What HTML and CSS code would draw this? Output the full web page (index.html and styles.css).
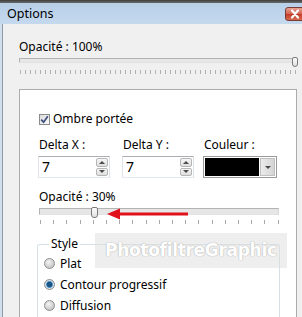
FILE: index.html
```html
<!DOCTYPE html>
<html lang="fr">
<head>
<meta charset="utf-8">
<title>Options</title>
<link rel="stylesheet" href="styles.css">
</head>
<body>
<div class="topstrip"></div>
<div class="titlebar">
  <span class="title">Options</span>
  <div class="close"><svg width="14" height="10" viewBox="0 0 14 10"><path d="M4 1.5 L10 8.5 M10 1.5 L4 8.5" stroke="#fff" stroke-width="2.2" stroke-linecap="round"/></svg></div>
</div>
<div class="main">
  <div class="frame"></div>
  <div class="content">
    <div class="label top-label">Opacité : 100%</div>
    <div class="slider slider-wide">
      <div class="track"></div>
      <div class="thumb"></div>
      <div class="ticks"></div>
    </div>
    <div class="panel">
      <div class="check-row">
        <span class="checkbox"><svg width="9" height="9" viewBox="0 0 9 9"><path d="M1.2 4.6 L3.6 7.2 L7.8 1.2" fill="none" stroke="#3c4f7e" stroke-width="1.7"/></svg></span>
        <span>Ombre portée</span>
      </div>
      <div class="fields">
        <div class="field f1">
          <div class="flabel">Delta X :</div>
          <div class="spin"><span class="val">7</span><div class="spin-btns"><div class="sbtn"><span class="up"></span></div><div class="sbtn"><span class="down"></span></div></div></div>
        </div>
        <div class="field f2">
          <div class="flabel">Delta Y :</div>
          <div class="spin"><span class="val">7</span><div class="spin-btns"><div class="sbtn"><span class="up"></span></div><div class="sbtn"><span class="down"></span></div></div></div>
        </div>
        <div class="field f3">
          <div class="flabel">Couleur :</div>
          <div class="color"><div class="swatch"></div><div class="drop"><span class="down"></span></div></div>
        </div>
      </div>
      <div class="label mid-label">Opacité : 30%</div>
      <div class="slider slider-narrow">
        <div class="track"></div>
        <div class="thumb"></div>
        <div class="ticks"></div>
      </div>
      <fieldset class="group">
        <legend>Style</legend>
        <div class="radio-row"><span class="radio"></span><span>Plat</span></div>
        <div class="radio-row"><span class="radio on"></span><span>Contour progressif</span></div>
        <div class="radio-row"><span class="radio"></span><span>Diffusion</span></div>
      </fieldset>
    </div>
  </div>
</div>
<svg class="arrow" width="82" height="12" viewBox="0 0 82 12"><path d="M0 6 L13 0.5 L13 4.5 L81 4.5 L81 7.5 L13 7.5 L13 11.5 Z" fill="#e0111b"/></svg>
<div class="watermark">PhotofiltreGraphic</div>
</body>
</html>
```

FILE: styles.css
```css
* { box-sizing: border-box; }
html, body { margin: 0; padding: 0; }
body {
  width: 302px;
  height: 317px;
  overflow: hidden;
  background: #f0f0f0;
  font-family: "Noto Sans", "Open Sans", sans-serif;
  font-size: 12px;
  color: #000;
}
.topstrip {
  height: 3px;
  background: linear-gradient(#3e3e3e, #6a6a6a);
}
.titlebar {
  height: 21px;
  display: flex;
  align-items: center;
  justify-content: space-between;
  padding-left: 7px;
  background: linear-gradient(#b8cfe8, #c5d9ee);
}
.title { font-size: 12.5px; line-height: 16px; }
.close {
  width: 20px;
  height: 14px;
  margin-right: -3px;
  margin-top: 1px;
  border: 1px solid #7a3a36;
  border-radius: 3px;
  background: linear-gradient(#e8a293, #d2614e 50%, #c33a26 51%, #d66b4f);
  display: flex;
  align-items: center;
  justify-content: center;
}
.main { display: flex; height: 293px; }
.frame {
  width: 3px;
  background: #d2deeb;
  border-right: 1px solid #8e9aa8;
}
.content {
  flex: 1;
  padding: 0 5px 0 16px;
}
.label { line-height: 16px; height: 16px; }
.top-label { margin-top: 15px; }
.slider { position: relative; }
.slider-wide { width: 278px; height: 21px; }
.slider-wide .track {
  position: absolute; left: 0; top: 3px;
  width: 274px; height: 5px;
  border: 1px solid #b3b3b3;
  border-bottom-color: #e2e2e2;
  border-right-color: #d6d6d6;
  background: #e7e7e7;
  border-radius: 1px;
}
.slider-wide .thumb {
  position: absolute; left: 273px; top: 2px;
  width: 6px; height: 10px;
}
.thumb {
  border: 1px solid #7b7b7b;
  border-radius: 2px 2px 3px 3px;
  background: linear-gradient(#fdfdfd, #e0e0e0);
}
.slider-wide .ticks {
  position: absolute; left: 1px; top: 15px;
  width: 276px; height: 4px;
  background: repeating-linear-gradient(90deg, #b0b0b0 0 1px, transparent 1px 5px);
}
.panel {
  margin-top: 13px;
  height: 240px;
  background: #fff;
  border: 1px solid #acacac;
  border-bottom: none;
  padding: 21px 0 0 18px;
}
.check-row {
  display: flex;
  align-items: center;
  height: 16px;
  line-height: 16px;
  padding-left: 1px;
}
.checkbox {
  width: 11px; height: 11px;
  border: 1px solid #8c8c8c;
  background: linear-gradient(135deg, #dcdcdc, #fafafa);
  margin-right: 3px;
  display: flex; align-items: center; justify-content: center;
}
.fields { display: flex; margin-top: 10px; }
.field { display: flex; flex-direction: column; }
.f1 { width: 72px; }
.f2 { width: 72px; margin-left: 12px; }
.f3 { width: 74px; margin-left: 9px; }
.flabel { line-height: 16px; height: 16px; padding-left: 1px; margin-bottom: 3px; }
.spin {
  height: 22px;
  border: 1px solid #abadb3;
  border-left-color: #e2e3ea;
  border-right-color: #dbdfe6;
  border-bottom-color: #e3e9ef;
  display: flex;
  align-items: center;
  justify-content: space-between;
  padding: 1px 1px 1px 3px;
}
.val { font-size: 14px; line-height: 18px; }
.spin-btns { display: flex; flex-direction: column; gap: 1px; height: 18px; }
.sbtn {
  width: 12px; height: 8.5px;
  border: 1px solid #b6b6b6;
  border-radius: 2px;
  background: linear-gradient(#f6f6f6, #dedede);
  display: flex; align-items: center; justify-content: center;
}
.up, .down { width: 0; height: 0; border-left: 3px solid transparent; border-right: 3px solid transparent; }
.up { border-bottom: 3px solid #4a4a4a; }
.down { border-top: 3px solid #4a4a4a; }
.color {
  height: 22px;
  border: 1px solid #9a9a9a;
  padding: 1px;
  display: flex;
  gap: 1px;
  background: #fff;
}
.swatch { flex: 1; background: #000; }
.drop {
  width: 15px;
  border: 1px solid #c0c0c0;
  background: linear-gradient(90deg, #ececec, #d4d4d4);
  display: flex; align-items: center; justify-content: center;
}
.mid-label { margin-top: 11px; padding-left: 1px; }
.slider-narrow { width: 240px; height: 21px; margin-left: 1px; }
.slider-narrow .track {
  position: absolute; left: 0; top: 3px;
  width: 240px; height: 7px;
  border: 1px solid #b3b3b3;
  border-bottom-color: #e2e2e2;
  border-right-color: #d6d6d6;
  background: #e6e6e6;
}
.slider-narrow .thumb {
  position: absolute; left: 52px; top: 2px;
  width: 7px; height: 11px;
}
.slider-narrow .ticks {
  position: absolute; left: 1px; top: 15px;
  width: 240px; height: 4px;
  background: repeating-linear-gradient(90deg, #a8a8a8 0 1px, transparent 1px 13.2px);
}
.group {
  margin: 10px 0 0 -1px;
  width: 243px;
  height: 90px;
  border: 1px solid #d5dfe5;
  border-bottom: none;
  border-radius: 3px 3px 0 0;
  padding: 1px 0 0 6px;
}
.group legend {
  padding: 0 2px;
  margin-left: 5px;
  line-height: 16px;
}
.radio-row {
  display: flex;
  align-items: center;
  height: 21px;
}
.radio {
  width: 11px; height: 11px;
  border-radius: 50%;
  border: 1px solid #8e8f8f;
  background: radial-gradient(circle at 40% 35%, #f4f4f4, #c8c8c8 70%);
  margin-right: 5px;
  position: relative;
}
.radio.on {
  background: radial-gradient(circle, #1c5486 0 2.5px, #5fa6d6 3.2px, #d8e6ef 3.8px, #c8c8c8 80%);
}
.arrow { position: absolute; left: 107px; top: 208px; }
.watermark {
  position: absolute;
  left: 95px; top: 233px;
  width: 192px; height: 35px;
  background: rgba(222, 222, 222, 0.5);
  color: #fff;
  font-family: "DejaVu Sans", sans-serif;
  font-weight: bold;
  font-size: 17px;
  line-height: 35px;
  padding-left: 10px;
  letter-spacing: -0.3px;
  text-shadow: 0 0 1px #b0b0b0, 0 0 1px #b0b0b0;
  white-space: nowrap;
  overflow: hidden;
}
```
